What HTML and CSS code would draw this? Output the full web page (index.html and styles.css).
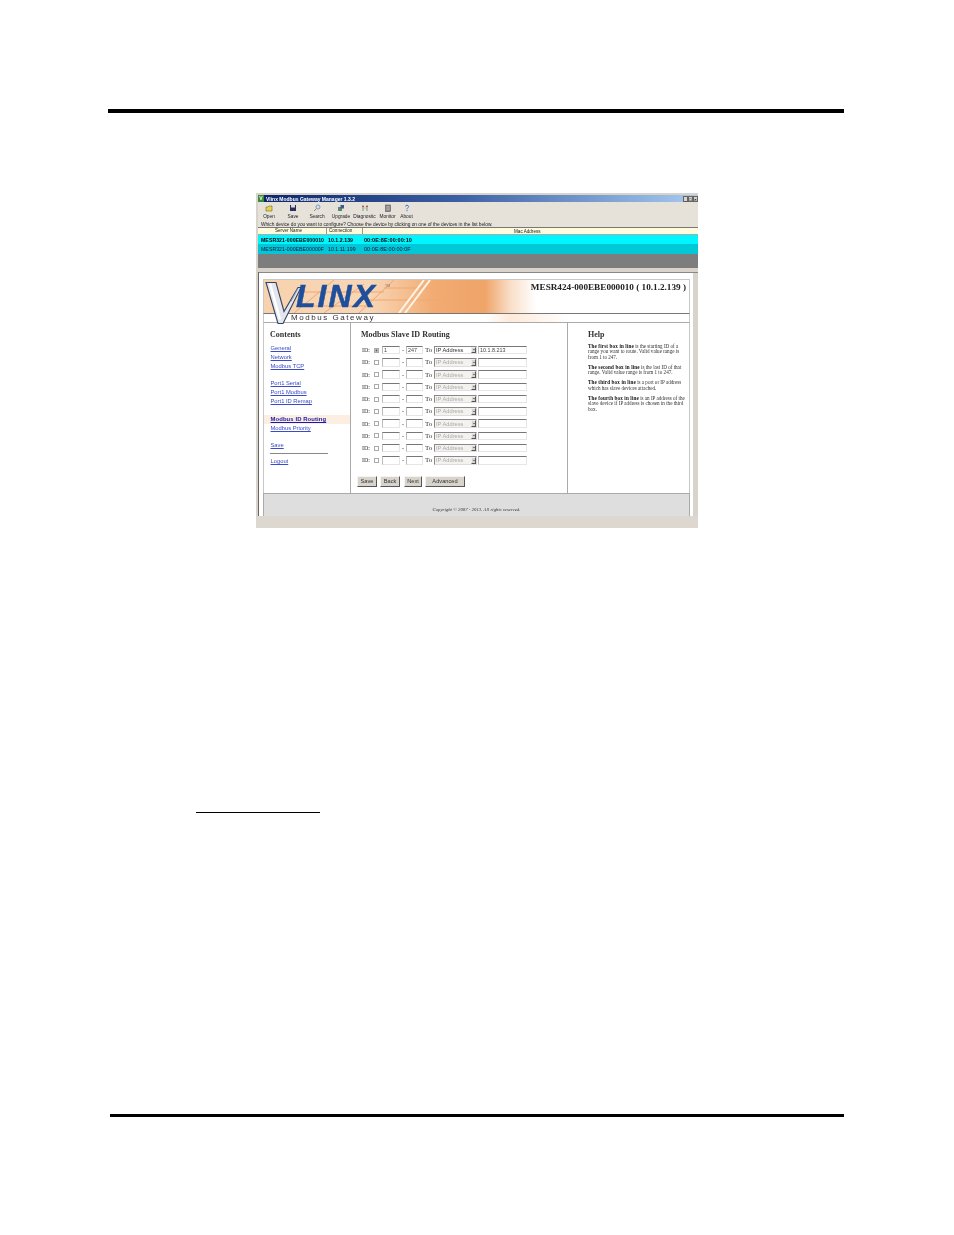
FILE: index.html
```html
<!DOCTYPE html>
<html lang="en">
<head>
<meta charset="utf-8">
<title>Modbus Slave ID Routing</title>
<link rel="stylesheet" href="styles.css">
</head>
<body>
<div class="page">
  <div class="rule-top"></div>
  <div class="shot">
    <div class="titlebar">
      <span class="app-icon">V</span>
      <span class="title-text">Vlinx Modbus Gateway Manager 1.3.2</span>
      <span class="winbtns"><i>_</i><i>□</i><i>×</i></span>
    </div>
    <div class="toolbar">
      <div class="tool t-open"><svg viewBox="0 0 8 8"><path d="M1 3h2l1-1h3v5H1z" fill="#e8d24a" stroke="#6b6b2a" stroke-width=".6"/></svg><span>Open</span></div>
      <div class="tool t-save"><svg viewBox="0 0 8 8"><rect x="1" y="1" width="6" height="6" fill="#27305a"/><rect x="2" y="1" width="4" height="2.5" fill="#d8dce8"/></svg><span>Save</span></div>
      <div class="tool t-search"><svg viewBox="0 0 8 8"><circle cx="5" cy="3" r="2" fill="#cfe2f5" stroke="#5d7fa8" stroke-width=".7"/><path d="M3.5 4.5 1 7" stroke="#a98a4a" stroke-width="1"/></svg><span>Search</span></div>
      <div class="tool t-upgrade"><svg viewBox="0 0 8 8"><rect x="1" y="3" width="4" height="4" fill="#5a8a6a"/><rect x="3.5" y="1" width="3.5" height="3.5" fill="#3a5a9a"/></svg><span>Upgrade</span></div>
      <div class="tool t-diag"><svg viewBox="0 0 8 8"><path d="M2 1v6M6 1v6" stroke="#7a9a7a" stroke-width="1"/><path d="M1 2.5h2M5 2.5h2" stroke="#c05050" stroke-width="1"/><path d="M2 4h4" stroke="#9ab09a" stroke-width=".6"/></svg><span>Diagnostic</span></div>
      <div class="tool t-monitor"><svg viewBox="0 0 8 8"><rect x="1.5" y="1" width="5" height="6.5" fill="#8a8a8a" stroke="#444" stroke-width=".5"/><path d="M2.5 2.5h3M2.5 4h3M2.5 5.5h3" stroke="#ddd" stroke-width=".4"/></svg><span>Monitor</span></div>
      <div class="tool t-about"><svg viewBox="0 0 8 8"><path d="M2.5 2.5C2.5 .8 5.5 .8 5.5 2.5 5.5 3.8 4 3.8 4 5.2" fill="none" stroke="#3a70c8" stroke-width="1"/><rect x="3.5" y="6" width="1" height="1.2" fill="#3a70c8"/></svg><span>About</span></div>
    </div>
    <div class="prompt">Which device do you want to configure? Choose the device by clicking on one of the devices in the list below.</div>
    <div class="dev-row dev-head"><span class="c-name">Server Name</span><span class="c-conn">Connection</span><span class="c-mac">Mac Address</span></div>
    <div class="dev-row dev-sel"><span class="c-name">MESR321-000EBE000010</span><span class="c-conn">10.1.2.139</span><span class="c-mac">00:0E:8E:00:00:10</span></div>
    <div class="dev-row dev-other"><span class="c-name">MESR321-000EBE00000F</span><span class="c-conn">10.1.11.199</span><span class="c-mac">00:0E:8E:00:00:0F</span></div>
    <div class="dev-empty"></div>
    <div class="splitter"></div>
    <div class="browser">
      <div class="viewport">
        <div class="webpage">
          <div class="banner">
            <svg class="circuit" viewBox="0 0 300 33" preserveAspectRatio="none">
              <path d="M30 33 70 0M60 33 100 4M95 33 130 0M120 8H170M100 20H180M40 12H120M50 26H110" stroke="#eda872" stroke-width="1" fill="none"/>
              <path d="M135 33 160 0M141 33 166 0" stroke="#fff3e6" stroke-width="2" fill="none"/>
            </svg>
            <svg class="vmark" viewBox="0 0 36 42"><path d="M1 1H11L19 30 33 6 36 6 18 42H13z" fill="#e4e6ee" stroke="#35435f" stroke-width="1.1"/><path d="M5 2 15 38" stroke="#fff" stroke-width="2.4"/><path d="M26 20 33 7" stroke="#8fa0c0" stroke-width="1"/></svg>
            <span class="linx">LINX</span>
            <span class="tm">TM</span>
            <span class="device-title">MESR424-000EBE000010 ( 10.1.2.139 )</span>
          </div>
          <div class="subbanner">Modbus Gateway</div>
          <div class="columns">
            <nav class="contents">
              <h3>Contents</h3>
              <a href="#" class="l-first">General</a>
              <a href="#">Network</a>
              <a href="#">Modbus TCP</a>
              <a href="#" class="l-group">Port1 Serial</a>
              <a href="#">Port1 Modbus</a>
              <a href="#">Port1 ID Remap</a>
              <a href="#" class="l-group current">Modbus ID Routing</a>
              <a href="#">Modbus Priority</a>
              <a href="#" class="l-group">Save</a>
              <hr>
              <a href="#" class="l-logout">Logout</a>
            </nav>
            <main class="form">
              <h3>Modbus Slave ID Routing</h3>
              <div class="routes">
                <div class="route"><span>ID:</span><input type="checkbox" checked><input type="text" value="1"><span class="dash">-</span><input type="text" value="247"><span class="to">To</span><div class="sel on">IP Address<b></b></div><input type="text" value="10.1.8.213"></div>
                <div class="route"><span>ID:</span><input type="checkbox"><input type="text"><span class="dash">-</span><input type="text"><span class="to">To</span><div class="sel">IP Address<b></b></div><input type="text"></div>
                <div class="route"><span>ID:</span><input type="checkbox"><input type="text"><span class="dash">-</span><input type="text"><span class="to">To</span><div class="sel">IP Address<b></b></div><input type="text"></div>
                <div class="route"><span>ID:</span><input type="checkbox"><input type="text"><span class="dash">-</span><input type="text"><span class="to">To</span><div class="sel">IP Address<b></b></div><input type="text"></div>
                <div class="route"><span>ID:</span><input type="checkbox"><input type="text"><span class="dash">-</span><input type="text"><span class="to">To</span><div class="sel">IP Address<b></b></div><input type="text"></div>
                <div class="route"><span>ID:</span><input type="checkbox"><input type="text"><span class="dash">-</span><input type="text"><span class="to">To</span><div class="sel">IP Address<b></b></div><input type="text"></div>
                <div class="route"><span>ID:</span><input type="checkbox"><input type="text"><span class="dash">-</span><input type="text"><span class="to">To</span><div class="sel">IP Address<b></b></div><input type="text"></div>
                <div class="route"><span>ID:</span><input type="checkbox"><input type="text"><span class="dash">-</span><input type="text"><span class="to">To</span><div class="sel">IP Address<b></b></div><input type="text"></div>
                <div class="route"><span>ID:</span><input type="checkbox"><input type="text"><span class="dash">-</span><input type="text"><span class="to">To</span><div class="sel">IP Address<b></b></div><input type="text"></div>
                <div class="route"><span>ID:</span><input type="checkbox"><input type="text"><span class="dash">-</span><input type="text"><span class="to">To</span><div class="sel">IP Address<b></b></div><input type="text"></div>
              </div>
              <div class="buttons">
                <button class="b-save">Save</button><button class="b-back">Back</button><button class="b-next">Next</button><button class="b-adv">Advanced</button>
              </div>
            </main>
            <aside class="help">
              <h3>Help</h3>
              <p><b>The first box in line</b> is the starting ID of a<br>range you want to route. Valid value range is<br>from 1 to 247.</p>
              <p><b>The second box in line</b> is the last ID of that<br>range. Valid value range is from 1 to 247.</p>
              <p><b>The third box in line</b> is a port or IP address<br>which has slave devices attached.</p>
              <p><b>The fourth box in line</b> is an IP address of the<br>slave device if IP address is chosen in the third<br>box.</p>
            </aside>
          </div>
          <div class="copyright">Copyright © 2007 - 2013. All rights reserved.</div>
        </div>
        <div class="scrollbar"></div>
      </div>
      <div class="statusbar"></div>
    </div>
  </div>
  <div class="rule-note"></div>
  <div class="rule-bottom"></div>
</div>
</body>
</html>
```
FILE: styles.css
```css
* { box-sizing: border-box; }
html, body { margin: 0; padding: 0; background: #fff; }
.page { width: 954px; height: 1235px; padding-top: 109px; overflow: hidden; font-family: "Liberation Sans", Arial, sans-serif; }
.rule-top { width: 736px; height: 4px; margin-left: 108px; background: #000; }
.rule-note { width: 124px; height: 1px; margin: 284px 0 0 196px; background: #000; }
.rule-bottom { width: 734px; height: 3px; margin: 301px 0 0 110px; background: #000; }

.shot { width: 442px; height: 335px; margin: 80px 0 0 256px; background: #d8d4cc; padding-top: 2px; padding-left: 2px; display: flex; flex-direction: column; font-size: 5px; color: #222; filter: blur(.35px); overflow: hidden; }

.titlebar { height: 7px; background: linear-gradient(90deg, #0a246a 0%, #3b5fa4 45%, #a6caf0 100%); display: flex; align-items: center; color: #fff; font-weight: bold; font-size: 5px; flex: none; }
.app-icon { width: 6px; height: 7px; background: #3d8a3a; text-align: center; line-height: 7px; margin-right: 2px; }
.title-text { flex: 1; white-space: nowrap; }
.winbtns { display: flex; gap: 0; }
.winbtns i { width: 5px; height: 6px; background: #d8d4cc; color: #000; font-style: normal; font-size: 4px; line-height: 6px; text-align: center; border: .5px solid #666; }

.toolbar { height: 20px; flex: none; display: flex; background: #e6e2da; padding-top: 2px; }
.tool { display: flex; flex-direction: column; align-items: center; width: 24px; flex: none; }
.tool svg { width: 8px; height: 8px; display: block; }
.tool span { font-size: 4.8px; line-height: 5px; margin-top: 2px; white-space: nowrap; }
.t-open { margin-left: -1px; }
.t-diag { width: 23px; }
.t-monitor { width: 23px; }
.t-about { width: 15px; }

.prompt { height: 5px; line-height: 6px; font-size: 4.8px; flex: none; white-space: nowrap; padding-left: 3px; background: #e6e2da; }

.dev-row { display: flex; flex: none; white-space: nowrap; align-items: center; }
.c-name { width: 69px; padding-left: 3px; }
.c-conn { width: 36px; padding-left: 1px; }
.c-mac { flex: 1; padding-left: 1px; }
.dev-head { height: 8px; background: #fffbdc; border-top: 1px solid #777; border-bottom: 1px solid #aaa; font-size: 4.6px; }
.dev-head .c-name { padding-left: 17px; border-right: 1px solid #999; height: 6px; line-height: 6px; }
.dev-head .c-conn { padding-left: 2px; border-right: 1px solid #999; height: 6px; line-height: 6px; }
.dev-head .c-mac { padding-left: 151px; }
.dev-sel { height: 9px; background: #00f6ff; font-weight: bold; color: #000; font-size: 5.2px; letter-spacing: .05px; }
.dev-other { height: 10px; background: #00c8d6; color: #114; font-size: 5.2px; letter-spacing: .05px; }
.dev-sel .c-mac, .dev-other .c-mac { font-size: 5.5px; }
.dev-empty { height: 14px; background: #7d7d7d; flex: none; }
.splitter { height: 4px; background: #d8d4cc; flex: none; }

.browser { flex: 1; display: flex; flex-direction: column; min-height: 0; background: #fff; border-left: 1px solid #666; }
.viewport { flex: 1; display: flex; min-height: 0; background: #fff; border-top: 1px solid #888; }
.webpage { width: 427px; margin: 6px 0 0 4px; border-top: 1px solid #c8c8c8; display: flex; flex-direction: column; flex: none; }
.scrollbar { width: 5px; margin-left: 3px; background: #d8d4cc; flex: none; }
.statusbar { height: 12px; flex: none; background: #dcd8d0; margin-left: -3px; }

.banner { height: 33px; flex: none; position: relative; border: 1px solid #c8c8c8; border-width: 0 1px; background: linear-gradient(90deg, #f7d2ae 0%, #f8d6b6 25%, #f2ab72 40%, #efa468 52%, #f9dfc8 58%, #ffffff 64%); }
.circuit { position: absolute; left: 0; top: 0; width: 300px; height: 33px; }
.vmark { position: absolute; left: 1px; top: 1px; width: 36px; height: 43px; }
.linx { position: absolute; left: 32px; top: 1px; font: italic 900 32px/30px "Liberation Sans", Arial, sans-serif; color: #1e4f9c; letter-spacing: 2px; -webkit-text-stroke: .5px #1e4f9c; white-space: nowrap; }
.tm { position: absolute; left: 121px; top: 4px; font-size: 3.5px; color: #777; }
.device-title { position: absolute; right: 3px; top: 2px; font: bold 9.2px/11px "Liberation Serif", serif; color: #222; white-space: nowrap; }
.subbanner { height: 10px; flex: none; border: 1px solid #c8c8c8; border-top-color: #777; border-bottom-color: #aaa; padding-left: 27px; font: 8px/8px "Liberation Sans", Arial, sans-serif; letter-spacing: 1.55px; color: #333; background: linear-gradient(90deg, #fff 0%, #fff 52%, #fdeadb 58%, #fff 72%); white-space: nowrap; }

.columns { height: 170px; flex: none; display: grid; grid-template-columns: 87px 217px 121px; border-left: 1px solid #c8c8c8; border-right: 1px solid #c8c8c8; }
h3 { margin: 0; font: bold 8px/8px "Liberation Serif", serif; color: #333; white-space: nowrap; }

.contents { display: flex; flex-direction: column; border-right: 1px solid #aaa; padding-top: 8px; }
.contents h3 { margin-left: 6px; }
.contents a { display: block; height: 9px; line-height: 9px; padding-left: 6.5px; font-size: 5.8px; color: #3a4ac8; text-decoration: underline; white-space: nowrap; }
.contents a.l-first { margin-top: 4.6px; }
.contents a.l-group { margin-top: 8.6px; }
.contents a.current { font-weight: bold; font-size: 5.9px; letter-spacing: .1px; background: #fdeee2; color: #1818b0; }
.contents hr { width: 58px; height: 1px; margin: 3px 0 3px 6px; border: 0; background: #888; }

.form { border-right: 1px solid #aaa; padding: 8px 0 0 9px; display: flex; flex-direction: column; }
.form h3 { margin-left: 1px; }
.routes { margin: 5px 0 0 2px; }
.route { height: 12.25px; display: grid; grid-template-columns: 12px 8px 18px 6px 17px 11px 43px 50px; align-items: center; font: 6px "Liberation Serif", serif; color: #333; }
.route input[type="text"] { width: 18px; height: 8.5px; padding: 0 0 0 1px; margin: 0; border: 1px solid; border-color: #777 #e6e6e6 #e6e6e6 #bbb; border-radius: 0; background: #fff; font: 5.4px "Liberation Sans", Arial, sans-serif; color: #444; outline: 0; }
.route input[type="checkbox"] { width: 5px; height: 5px; margin: 0; appearance: none; border: 1px solid #aaa; background: #fff; }
.route input[type="checkbox"]:checked { background: #556; box-shadow: inset 0 0 0 .6px #ddd; }
.route input:nth-of-type(3) { width: 17px; }
.route input:last-child { width: 49px; margin-left: 1px; }
.dash { padding-left: 2px; }
.to { padding-left: 2px; font-size: 7px; }
.sel { width: 43px; height: 8.5px; display: flex; align-items: center; justify-content: space-between; border: 1px solid; border-color: #888 #ddd #ddd #888; padding-left: 1px; font: 5.7px/6px "Liberation Sans", Arial, sans-serif; color: #aaa; background: #f4f2ee; white-space: nowrap; }
.sel.on { color: #333; background: #fff; }
.sel b { width: 5px; height: 6.5px; background: #d8d4cc; border: 1px solid; border-color: #eee #555 #555 #eee; position: relative; }
.sel b::after { content: ""; position: absolute; left: .5px; top: 1.5px; border: 1px solid transparent; border-top: 1.5px solid #222; border-bottom: 0; }
.buttons { display: flex; margin-top: 9px; margin-left: -3px; }
.buttons button { height: 11px; padding: 0; margin: 0; font: 5.7px "Liberation Sans", Arial, sans-serif; color: #333; background: #d8d4cc; border: 1px solid; border-color: #f4f4f4 #555 #555 #f4f4f4; border-radius: 0; }
.b-save { width: 20px; }
.buttons .b-back { width: 20px; margin-left: 3px; }
.buttons .b-next { width: 18px; margin-left: 4px; }
.buttons .b-adv { width: 40px; margin-left: 3px; }

.help { padding: 8px 0 0 20px; font: 5.1px/5.3px "Liberation Serif", serif; color: #333; white-space: nowrap; }
.help p { margin: 0 0 5px; }
.help h3 + p { margin-top: 5px; }
.help b { color: #111; letter-spacing: .15px; }

.copyright { height: 23px; flex: none; background: #dedede; border: 1px solid #aaa; border-width: 1px 1px 0 1px; text-align: center; font: italic 4.7px/32px "Liberation Serif", serif; letter-spacing: .05px; color: #333; }
```
